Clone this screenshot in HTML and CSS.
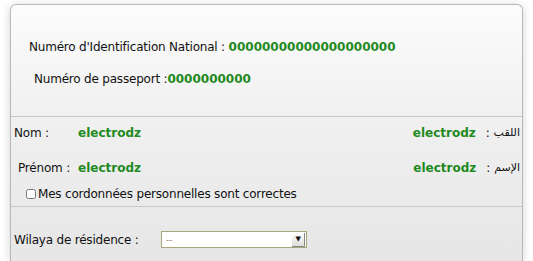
FILE: index.html
```html
<!DOCTYPE html>
<html lang="fr">
<head>
    <meta charset="UTF-8">
    <meta name="viewport" content="width=device-width, initial-scale=1.0">
    <title>Informations personnelles</title>
    <link rel="stylesheet" href="styles.css">
</head>
<body>
<div class="card">
    <div class="ids">
        <p class="id-line">Numéro d'Identification National : <b>00000000000000000000</b></p>
        <p class="id-line pass">Numéro de passeport :<b>0000000000</b></p>
    </div>

    <div class="person">
        <div class="row">
            <div class="fr"><span class="lbl nom">Nom :</span><b>electrodz</b></div>
            <div class="ar"><b>electrodz</b><span class="colon">:</span><span class="ar-lbl" lang="ar">اللقب</span></div>
        </div>
        <div class="row">
            <div class="fr"><span class="lbl prenom">Prénom :</span><b>electrodz</b></div>
            <div class="ar"><b>electrodz</b><span class="colon">:</span><span class="ar-lbl" lang="ar">الإسم</span></div>
        </div>
        <label class="confirm"><input type="checkbox" id="ok">Mes cordonnées personnelles sont correctes</label>
    </div>

    <div class="address">
        <label for="wilaya">Wilaya de résidence :</label>
        <span class="select-wrap">
            <select id="wilaya" name="wilaya"><option>--</option></select>
            <span class="arrow">&#9660;</span>
        </span>
    </div>
</div>
</body>
</html>
```

FILE: styles.css
```css
body {
    margin: 0;
    background: #fff;
    font-family: "DejaVu Sans", Verdana, sans-serif;
    font-size: 12px;
    letter-spacing: -0.2px;
    color: #111;
}
.card {
    margin: 4px 0 0 10px;
    width: 511px;
    height: 256px;
    overflow: hidden;
    border: 1px solid #b9b9b9;
    border-bottom: none;
    border-radius: 6px 6px 0 0;
    background: linear-gradient(#fcfcfc, #f0f0f0 45%, #e6e6e6);
    box-shadow: 0 1px 8px rgba(0, 0, 0, 0.18);
}
b {
    color: #1f8a1f;
    letter-spacing: 0;
}
.ids {
    padding: 34px 0 29px 18px;
    border-bottom: 1px solid #c9c9c9;
}
.id-line {
    margin: 0;
    line-height: 16px;
}
.id-line.pass {
    margin-top: 16px;
    padding-left: 5px;
}
.person {
    padding: 8px 2px 4px 3px;
    border-bottom: 1px solid #c9c9c9;
}
.row {
    display: flex;
    justify-content: space-between;
    line-height: 16px;
    margin-bottom: 19px;
}
.row + .row {
    margin-bottom: 10px;
}
.fr {
    display: flex;
}
.lbl.nom {
    width: 64px;
}
.lbl.prenom {
    width: 60px;
    margin-left: 4px;
}
.ar {
    display: flex;
    align-items: center;
}
.colon {
    margin: 0 4px 0 10px;
}
.ar-lbl {
    font-family: "DejaVu Sans", sans-serif;
    font-size: 11px;
    letter-spacing: 0;
}
.confirm {
    display: flex;
    align-items: center;
    line-height: 16px;
    padding-left: 12px;
}
.confirm input {
    width: 10px;
    height: 10px;
    margin: 0 2px 0 0;
}
.address {
    display: flex;
    align-items: center;
    padding: 24px 0 0 3px;
}
.address label {
    width: 147px;
}
.select-wrap {
    position: relative;
    display: inline-block;
}
.select-wrap select {
    appearance: none;
    width: 146px;
    height: 17px;
    padding: 0 0 0 4px;
    border: 1px solid #a9a67d;
    border-radius: 0;
    background: #fff;
    font-family: inherit;
    font-size: 9px;
    color: #a08060;
}
.arrow {
    position: absolute;
    top: 2px;
    right: 2px;
    width: 12px;
    height: 13px;
    background: linear-gradient(#fff, #ddd);
    border-right: 1px solid #888;
    border-bottom: 1px solid #888;
    font-size: 7px;
    line-height: 13px;
    text-align: center;
    color: #111;
}
```
